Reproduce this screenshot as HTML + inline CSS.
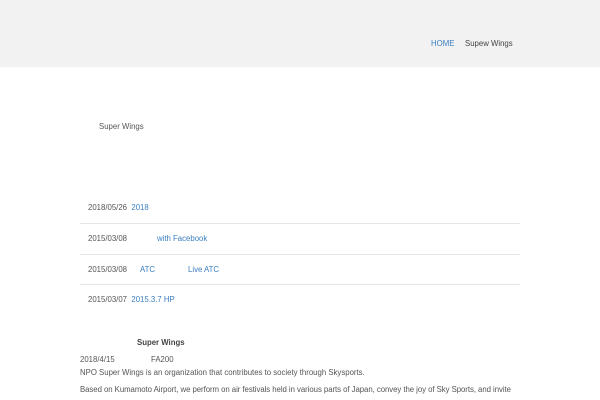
<!DOCTYPE html>
<html><head><meta charset="utf-8"><style>
body{margin:0;width:600px;height:400px;overflow:hidden;background:#fff;font-family:"Liberation Sans","Noto Sans CJK JP",sans-serif;font-size:7.8px;color:#555;position:relative}
.hdr{position:absolute;left:0;top:0;width:600px;height:67px;background:#f2f2f2}
.a{position:absolute;white-space:nowrap}
.l{color:#3a7fc0}
.line{position:absolute;left:80px;width:440px;height:1px;background:#e6e6e6}
</style></head><body>
<div class="hdr"></div>
<div class="a l" style="left:431px;top:39px">HOME</div>
<div class="a" style="left:465px;top:39px;color:#444">Supew Wings</div>
<div class="a" style="left:99px;top:122px">Super Wings</div>
<div class="a" style="left:88px;top:203px">2018/05/26 <span class="l">&nbsp;2018</span></div>
<div class="line" style="top:223px"></div>
<div class="a" style="left:88px;top:234px">2015/03/08</div><div class="a l" style="left:157px;top:234px">with Facebook</div>
<div class="line" style="top:254px"></div>
<div class="a" style="left:88px;top:265px">2015/03/08</div><div class="a l" style="left:140px;top:265px">ATC</div><div class="a l" style="left:188px;top:265px">Live ATC</div>
<div class="line" style="top:284px"></div>
<div class="a" style="left:88px;top:295px">2015/03/07 <span class="l">&nbsp;2015.3.7 HP</span></div>
<div class="a" style="left:137px;top:338px;font-weight:bold;color:#444">Super Wings</div>
<div class="a" style="left:80px;top:355px">2018/4/15</div><div class="a" style="left:151px;top:355px">FA200</div>
<div class="a" style="left:80px;top:368px">NPO Super Wings is an organization that contributes to society through Skysports.</div>
<div class="a" style="left:80px;top:385px;letter-spacing:-0.05px">Based on Kumamoto Airport, we perform on air festivals held in various parts of Japan, convey the joy of Sky Sports, and invite</div>
</body></html>
